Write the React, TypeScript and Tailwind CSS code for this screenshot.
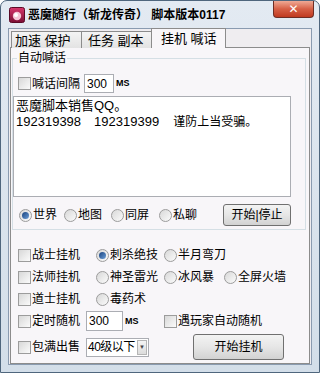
import type { ReactNode } from "react";

const FONT = '"Liberation Sans", "Noto Sans CJK SC", sans-serif';

function Box({ checked = false }: { checked?: boolean }) {
  return (
    <span className="flex h-[13px] w-[13px] shrink-0 items-center justify-center border border-[#9c9c9c] bg-gradient-to-br from-[#d8d8d8] to-[#fbfbfb]">
      {checked ? <span className="text-[10px] leading-none">✓</span> : null}
    </span>
  );
}

function Radio({ checked = false }: { checked?: boolean }) {
  return (
    <span className="flex h-[13px] w-[13px] shrink-0 items-center justify-center rounded-full border border-[#9c9c9c] bg-gradient-to-br from-[#d8d8d8] to-[#fbfbfb]">
      {checked ? (
        <span className="h-[7px] w-[7px] rounded-full bg-gradient-to-br from-[#17427e] to-[#6d9fd8]" />
      ) : null}
    </span>
  );
}

function Check({ label, checked, className = "" }: { label: string; checked?: boolean; className?: string }) {
  return (
    <span className={`flex items-center gap-[1px] ${className}`}>
      <Box checked={checked} />
      <span className="whitespace-nowrap text-[12px] leading-[14px]">{label}</span>
    </span>
  );
}

function Opt({ label, checked, className = "" }: { label: string; checked?: boolean; className?: string }) {
  return (
    <span className={`flex items-center gap-[1px] ${className}`}>
      <Radio checked={checked} />
      <span className="whitespace-nowrap text-[12px] leading-[14px]">{label}</span>
    </span>
  );
}

function Btn({ children, className = "" }: { children: ReactNode; className?: string }) {
  return (
    <button
      type="button"
      className={`flex items-center justify-center rounded-[3px] border border-[#707070] bg-gradient-to-b from-[#f3f3f3] via-[#e6e6e6] to-[#d2d2d2] text-[12px] leading-[14px] text-black ${className}`}
    >
      {children}
    </button>
  );
}

function Field({ value, className = "" }: { value: string; className?: string }) {
  return (
    <span className={`flex items-center border border-[#abadb3] bg-white pl-[2px] text-[12px] leading-[14px] ${className}`}>
      {value}
    </span>
  );
}

export default function App() {
  return (
    <div className="h-[373px] w-[320px] overflow-hidden bg-white text-black" style={{ fontFamily: FONT }}>
      <div className="flex h-[373px] flex-col rounded-t-[7px] border border-[#4f667d] bg-gradient-to-b from-[#e3eaf2] to-[#d3dee9]">
        {/* title bar */}
        <div className="flex h-[27px] shrink-0 items-start">
          <svg width="16" height="16" viewBox="0 0 16 16" className="ml-[8px] mt-[6px]">
            <defs>
              <linearGradient id="ic" x1="0" y1="0" x2="0" y2="1">
                <stop offset="0" stopColor="#d8366c" />
                <stop offset="1" stopColor="#7a0e34" />
              </linearGradient>
            </defs>
            <rect x="0.5" y="0.5" width="15" height="15" rx="2" fill="url(#ic)" stroke="#5a0a26" />
            <circle cx="8" cy="9" r="4.2" fill="#f6c4d6" />
            <circle cx="7" cy="8" r="2" fill="#ffffff" />
          </svg>
          <span className="ml-[3px] mt-[7px] flex-1 whitespace-nowrap text-[12px] font-bold leading-[14px]">
            恶魔随行（斩龙传奇） 脚本版本0117
          </span>
          <span className="mr-[5px] flex h-[17px] w-[41px] items-center justify-center rounded-b-[4px] border border-t-0 border-[#6e2d24] bg-gradient-to-b from-[#eea995] via-[#d65f45] to-[#c0391f]">
            <span className="text-[12px] font-bold leading-none text-white" style={{ fontFamily: '"DejaVu Sans", sans-serif' }}>
              ✕
            </span>
          </span>
        </div>

        {/* client area */}
        <div className="mx-[7px] h-[337px] shrink-0 border border-[#8a9bb0] bg-[#efedf0] pl-[1px]">
          {/* tabs */}
          <div className="relative z-10 -mb-px flex h-[19px] items-end">
            <div className="ml-[1px] flex h-[17px] w-[71px] items-center border border-b-0 border-[#8c8c8c] bg-gradient-to-b from-[#f4f4f4] to-[#e3e3e3] pl-[3px] text-[13px] leading-[15px]">
              加速 保护
            </div>
            <div className="flex h-[17px] w-[71px] items-center border border-b-0 border-l-0 border-[#8c8c8c] bg-gradient-to-b from-[#f4f4f4] to-[#e3e3e3] pl-[6px] text-[13px] leading-[15px]">
              任务 副本
            </div>
            <div className="-ml-[2px] flex h-[20px] w-[75px] items-center border border-b-0 border-[#8c8c8c] bg-[#f8f6f9] pl-[9px] text-[13px] leading-[15px]">
              挂机 喊话
            </div>
          </div>

          {/* panel */}
          <div className="h-[317px] w-[300px] border border-[#8c8c8c] bg-[#f8f6f9] pt-[3px]">
            <fieldset className="ml-[1px] w-[294px] border border-[#d5dfe5] pb-[3px]">
              <legend className="ml-[4px] px-[1px] text-[12px] leading-[14px]">自动喊话</legend>
              <div className="mt-[9px] flex h-[19px] items-center pl-[5px]">
                <Check label="喊话间隔" className="w-[66px]" />
                <Field value="300" className="h-[19px] w-[30px]" />
                <span className="ml-[2px] text-[9px] font-bold leading-none">MS</span>
              </div>
              <div className="mt-[3px] h-[101px] w-[278px] border border-[#abadb3] bg-white px-[2px] pt-[1px] text-[13px] leading-[16px]">
                <div>恶魔脚本销售QQ。</div>
                <div className="flex">
                  <span>192319398</span>
                  <span className="ml-[13px]">192319399</span>
                  <span className="ml-[14px] text-[12px]">谨防上当受骗。</span>
                </div>
              </div>
              <div className="mt-[7px] flex h-[22px] items-center pl-[6px]">
                <Opt label="世界" checked className="w-[45px]" />
                <Opt label="地图" className="w-[47px]" />
                <Opt label="同屏" className="w-[48px]" />
                <Opt label="私聊" className="w-[64px]" />
                <Btn className="h-[22px] w-[68px]">开始|停止</Btn>
              </div>
            </fieldset>

            <div className="mt-[15px] flex h-[20px] items-center pl-[7px]">
              <Check label="战士挂机" className="w-[78px]" />
              <Opt label="刺杀绝技" checked className="w-[68px]" />
              <Opt label="半月弯刀" />
            </div>
            <div className="mt-[2px] flex h-[20px] items-center pl-[7px]">
              <Check label="法师挂机" className="w-[78px]" />
              <Opt label="神圣雷光" className="w-[68px]" />
              <Opt label="冰风暴" className="w-[60px]" />
              <Opt label="全屏火墙" />
            </div>
            <div className="mt-[2px] flex h-[20px] items-center pl-[7px]">
              <Check label="道士挂机" className="w-[78px]" />
              <Opt label="毒药术" />
            </div>
            <div className="mt-[2px] flex h-[20px] items-center pl-[7px]">
              <Check label="定时随机" className="w-[68px]" />
              <Field value="300" className="h-[20px] w-[37px]" />
              <span className="ml-[2px] w-[39px] text-[9px] font-bold leading-none">MS</span>
              <Check label="遇玩家自动随机" />
            </div>
            <div className="mt-[3px] flex h-[26px] items-center pl-[7px]">
              <Check label="包满出售" className="w-[68px]" />
              <span className="flex h-[19px] w-[63px] items-center border border-[#abadb3] bg-white pl-[1px] text-[12px] leading-[14px]">
                <span className="flex-1 whitespace-nowrap tracking-[-0.5px]">40级以下</span>
                <span className="mr-[1px] flex h-[15px] w-[10px] shrink-0 items-center justify-center border border-[#b5b5b5] bg-gradient-to-b from-[#f4f4f4] to-[#dcdcdc] text-[6px] leading-none text-[#444]">
                  ▼
                </span>
              </span>
              <Btn className="ml-[44px] h-[26px] w-[91px]">开始挂机</Btn>
            </div>
          </div>
        </div>
      </div>
    </div>
  );
}
